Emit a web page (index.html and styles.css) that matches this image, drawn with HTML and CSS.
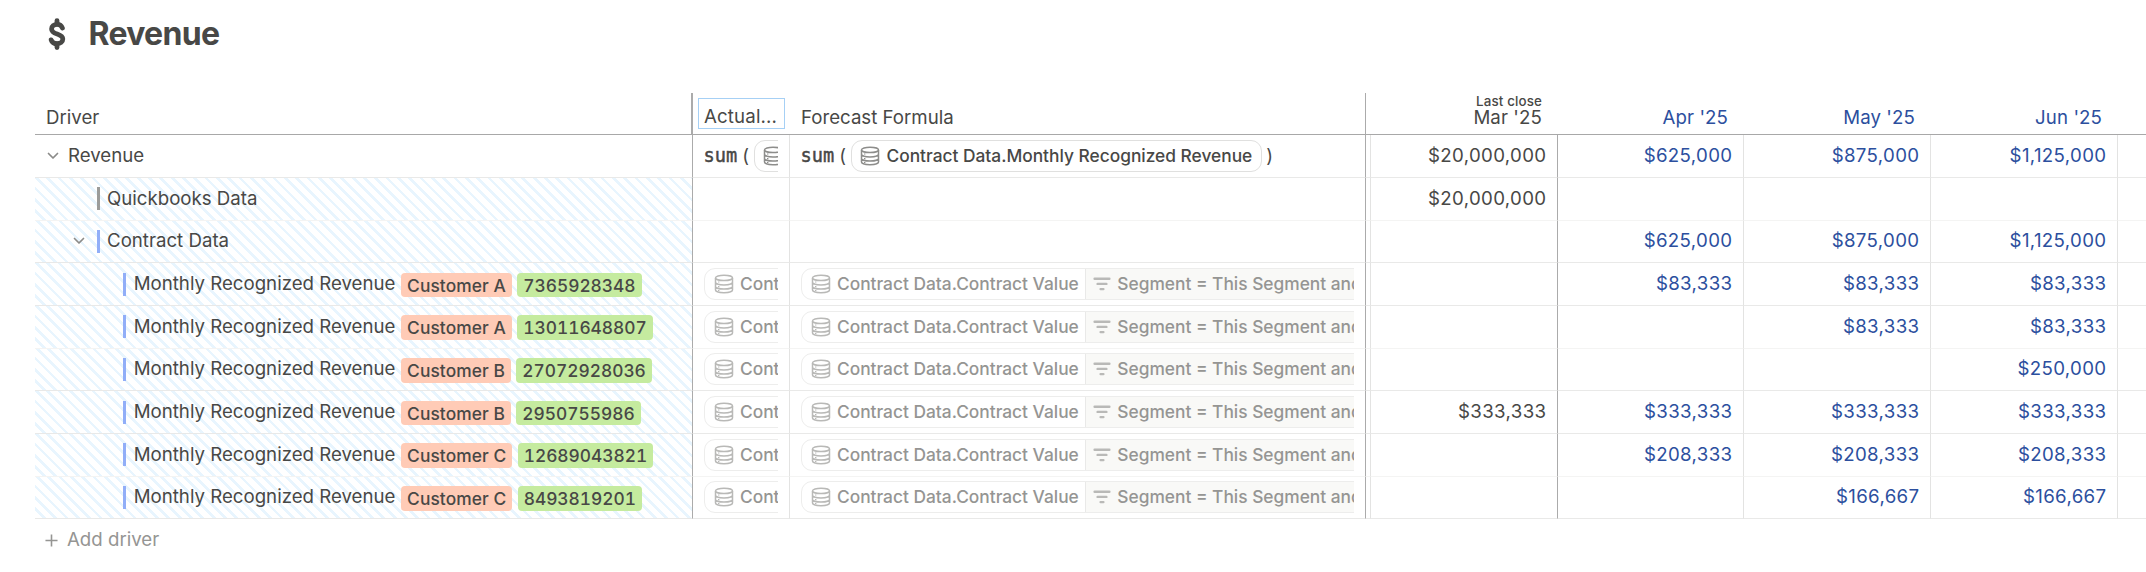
FILE: index.html
```
<!DOCTYPE html>
<html lang="en">
<head>
<meta charset="utf-8">
<title>Revenue</title>
<link rel="stylesheet" href="styles.css">
</head>
<body>
<svg width="0" height="0" class="defs">
  <symbol id="db" viewBox="0 0 20 20"><g fill="none" stroke="currentColor" stroke-width="1.5"><ellipse cx="10" cy="3.9" rx="8.5" ry="2.7"/><path d="M1.500 3.900v12.200c0 1.500 3.800 2.700 8.500 2.700s8.500-1.200 8.500-2.700V3.900M1.500 8.300c0 1.500 3.800 2.700 8.500 2.700s8.500-1.200 8.500-2.700M1.500 12.400c0 1.500 3.800 2.700 8.500 2.700s8.500-1.200 8.500-2.700"/></g><path fill="currentColor" d="M4 7.400h1.400v1.200H4zM4 12h1.400v1.200H4zM4 15.900h1.400v1.200H4z"/></symbol>
  <symbol id="filter" viewBox="0 0 18 14"><path d="M1.600 1.700h14.800M4.600 6.900h8.800M7.600 12.100h2.800" stroke="currentColor" stroke-width="2.4" stroke-linecap="round" fill="none"/></symbol>
  <symbol id="chev" viewBox="0 0 12 8"><path d="M1.500 1.500 6 6l4.500-4.500" stroke="currentColor" stroke-width="1.700" stroke-linecap="round" stroke-linejoin="round" fill="none"/></symbol>
</svg>
<header class="title">
  <svg class="dollar" viewBox="0 0 18 34"><g fill="none" stroke="currentColor" stroke-linecap="round" stroke-width="4.800"><path d="M9 3.600v3.500M9 27v3.500"/><path d="M14.400 11C13.500 8.500 11.800 7.400 9.100 7.400c-3.200 0-5.500 1.800-5.500 4.500 0 6.300 11.200 3.900 11.200 10.200 0 2.800-2.400 4.600-5.700 4.600-3 0-5.100-1.300-5.900-3.800"/></g></svg>
  <h1>Revenue</h1>
</header>
<main class="grid" id="grid"></main>
<div class="add"><svg viewBox="0 0 14 14"><path d="M7 .5v13M.5 7h13" stroke="currentColor" stroke-width="1.700"/></svg><span>Add driver</span></div>
<script src="app.js"></script>
</body>
</html>
```
FILE: styles.css
```
body { margin: 0; background: #fff; color: #484846; font: 18.667px/24px Inter, "Liberation Sans", sans-serif; overflow: hidden; }
.defs { display: block; }
.title { display: flex; align-items: center; height: 67px; padding-left: 48px; box-sizing: border-box; }
.title h1 { margin: 0 0 0 22.500px; font-size: 32px; font-weight: 700; line-height: 40px; letter-spacing: -0.7px; }
.dollar { width: 18px; height: 34px; margin-top: 1px; }
.grid { margin: 25.650px 0 0 35px; }
.row { display: grid; grid-template-columns: 658px 97px 576px 5px 187px 186px 187px 187px 1fr; height: 42.667px; }
.cell { box-sizing: border-box; border-right: 1px solid #e3e3e2; border-bottom: 1px solid #e9e9e8; display: flex; align-items: center; overflow: hidden; white-space: nowrap; min-width: 0; }
.row:nth-child(3n) .cell { border-bottom-color: #f4f4f3; }
.cell.edge { border-right-color: #ababab; }
.row .cell:last-child { border-right: 0; }
.head .cell { border-right: 0; border-bottom-color: #a8a8a8; align-items: flex-end; padding: 0 0 4.200px; }
.head .driver { border-right: 2px solid #ababab; padding-left: 11px; }
.head .formula { padding-left: 11px; }
.head .spacer { padding: 0; }
.head .edge { border-right: 1px solid #ababab; }
.head .actual { padding: 0 0 5px 5px; }
.focus { box-sizing: border-box; width: 87px; height: 31px; border: 1px solid #a6d0f5; padding: 6px 0 0 5px; line-height: 24px; letter-spacing: .15px; }
.head .num { flex-direction: column; justify-content: flex-end; padding-right: 16px; padding-bottom: 6.200px; line-height: 20px; letter-spacing: .1px; }
.head .num small { font-size: 13.333px; font-weight: 500; line-height: 14px; letter-spacing: .15px; }
.num { justify-content: flex-end; padding-right: 10.600px; color: #2c4f9e; letter-spacing: .35px; }
.num.first { color: #484846; }
.driver { padding-left: 12px; }
.chev { width: 12px; height: 8px; color: #8b8b89; margin-right: 9px; }
.striped .driver { background: repeating-linear-gradient(45deg, #fff 0 5.333px, #e8f5fe 5.333px 8px); }
.bar { width: 3px; height: 23px; margin-right: 7px; background: #91aef8; }
.bar.gray { background: #9c9c9a; }
.lvl1 .driver { padding-left: 62px; }
.lvl1.open .driver { padding-left: 38px; }
.lvl1 .chev { margin-right: 12px; }
.lvl2 .driver { padding-left: 88px; }
.mrr { margin-left: .7px; }
.tag { font-size: 17.333px; letter-spacing: .1px; font-weight: 500; border-radius: 4px; height: 24.667px; line-height: 25px; padding: 0 6px; margin-left: 5.700px; background: #ffcbb6; margin-top: 2px; }
.tag.id { background: #c5eb9f; font-variant-numeric: tabular-nums; letter-spacing: 0; margin-left: 5.300px; }
.fx { padding: 0 11px; }
.clip { display: flex; align-items: center; overflow: hidden; min-width: 0; width: 100%; height: 100%; }
.sum { font: 18.667px/24px "DejaVu Sans Mono", monospace; -webkit-text-stroke: .45px currentColor; margin-left: -.500px; }
.paren { margin: 0 4.500px 0 5px; }
.close { margin-left: 4.500px; }
.pill { flex: none; box-sizing: border-box; display: flex; height: 32px; border: 1px solid #e0e0df; border-radius: 11px; font-size: 17.333px; font-weight: 500; overflow: hidden; line-height: 30px; }
.pill .main { display: flex; align-items: center; padding: 0 8.500px; gap: 6.500px; }
.pill .db { width: 20px; height: 20px; color: #8d8d8b; }
.pill .where { display: flex; align-items: center; background: #f9f9f7; border-left: 1px solid #e9e9e8; padding: 0 8px 0 7px; gap: 6.500px; }
.pill .filter { width: 18px; height: 14px; }
.dim { border-color: #ededec; color: #959593; }
.pill.dim .main { padding-right: 6px; }
.pill.dim .db, .pill.dim .filter { color: #b9b9b7; }
.add { display: flex; align-items: center; gap: 9px; color: #959593; padding: 9px 0 0 45px; }
.add svg { width: 13px; height: 13px; margin-top: 1px; }
```
FILE: app.js
```
const svg = (id) => `<svg class="${id}"><use href="#${id}"/></svg>`;
const pill = (label, dim, where) => `<span class="pill ${dim ? 'dim' : ''}"><span class="main">${svg('db')}<span>${label}</span></span>${where ? `<span class="where">${svg('filter')}<span>${where}</span></span>` : ''}</span>`;
const sum = `<span class="sum">sum</span><span class="paren">(</span>${pill('Contract Data.Monthly Recognized Revenue')}<span class="close">)</span>`;
const value = pill('Contract Data.Contract Value', true, 'Segment = This Segment and Date');
const mrr = (c, id, nums) => ({ cls: 'striped lvl2', driver: `<span class="bar"></span><span class="mrr">Monthly Recognized Revenue</span><span class="tag">Customer ${c}</span><span class="tag id">${id}</span>`, fx: value, nums });
const rows = [
  { cls: '', driver: `${svg('chev')}<span>Revenue</span>`, fx: sum, nums: ['$20,000,000', '$625,000', '$875,000', '$1,125,000'] },
  { cls: 'striped lvl1', driver: '<span class="bar gray"></span><span>Quickbooks Data</span>', fx: '', nums: ['$20,000,000', '', '', ''] },
  { cls: 'striped lvl1 open', driver: `${svg('chev')}<span class="bar"></span><span>Contract Data</span>`, fx: '', nums: ['', '$625,000', '$875,000', '$1,125,000'] },
  mrr('A', '7365928348', ['', '$83,333', '$83,333', '$83,333']),
  mrr('A', '13011648807', ['', '', '$83,333', '$83,333']),
  mrr('B', '27072928036', ['', '', '', '$250,000']),
  mrr('B', '2950755986', ['$333,333', '$333,333', '$333,333', '$333,333']),
  mrr('C', '12689043821', ['', '$208,333', '$208,333', '$208,333']),
  mrr('C', '8493819201', ['', '', '$166,667', '$166,667'])
];
const head = `<div class="row head"><div class="cell driver">Driver</div><div class="cell actual"><div class="focus">Actual...</div></div><div class="cell formula edge">Forecast Formula</div><div class="cell spacer"></div><div class="cell num first"><small>Last close</small>Mar '25</div><div class="cell num">Apr '25</div><div class="cell num">May '25</div><div class="cell num">Jun '25</div><div class="cell"></div></div>`;
document.getElementById('grid').innerHTML = head + rows.map((r) => `<div class="row ${r.cls}"><div class="cell driver edge">${r.driver}</div><div class="cell fx"><div class="clip">${r.fx}</div></div><div class="cell fx edge"><div class="clip">${r.fx}</div></div><div class="cell spacer"></div>${r.nums.map((n, i) => `<div class="cell num ${i === 0 ? 'first edge' : ''}">${n}</div>`).join('')}<div class="cell"></div></div>`).join('');
```
